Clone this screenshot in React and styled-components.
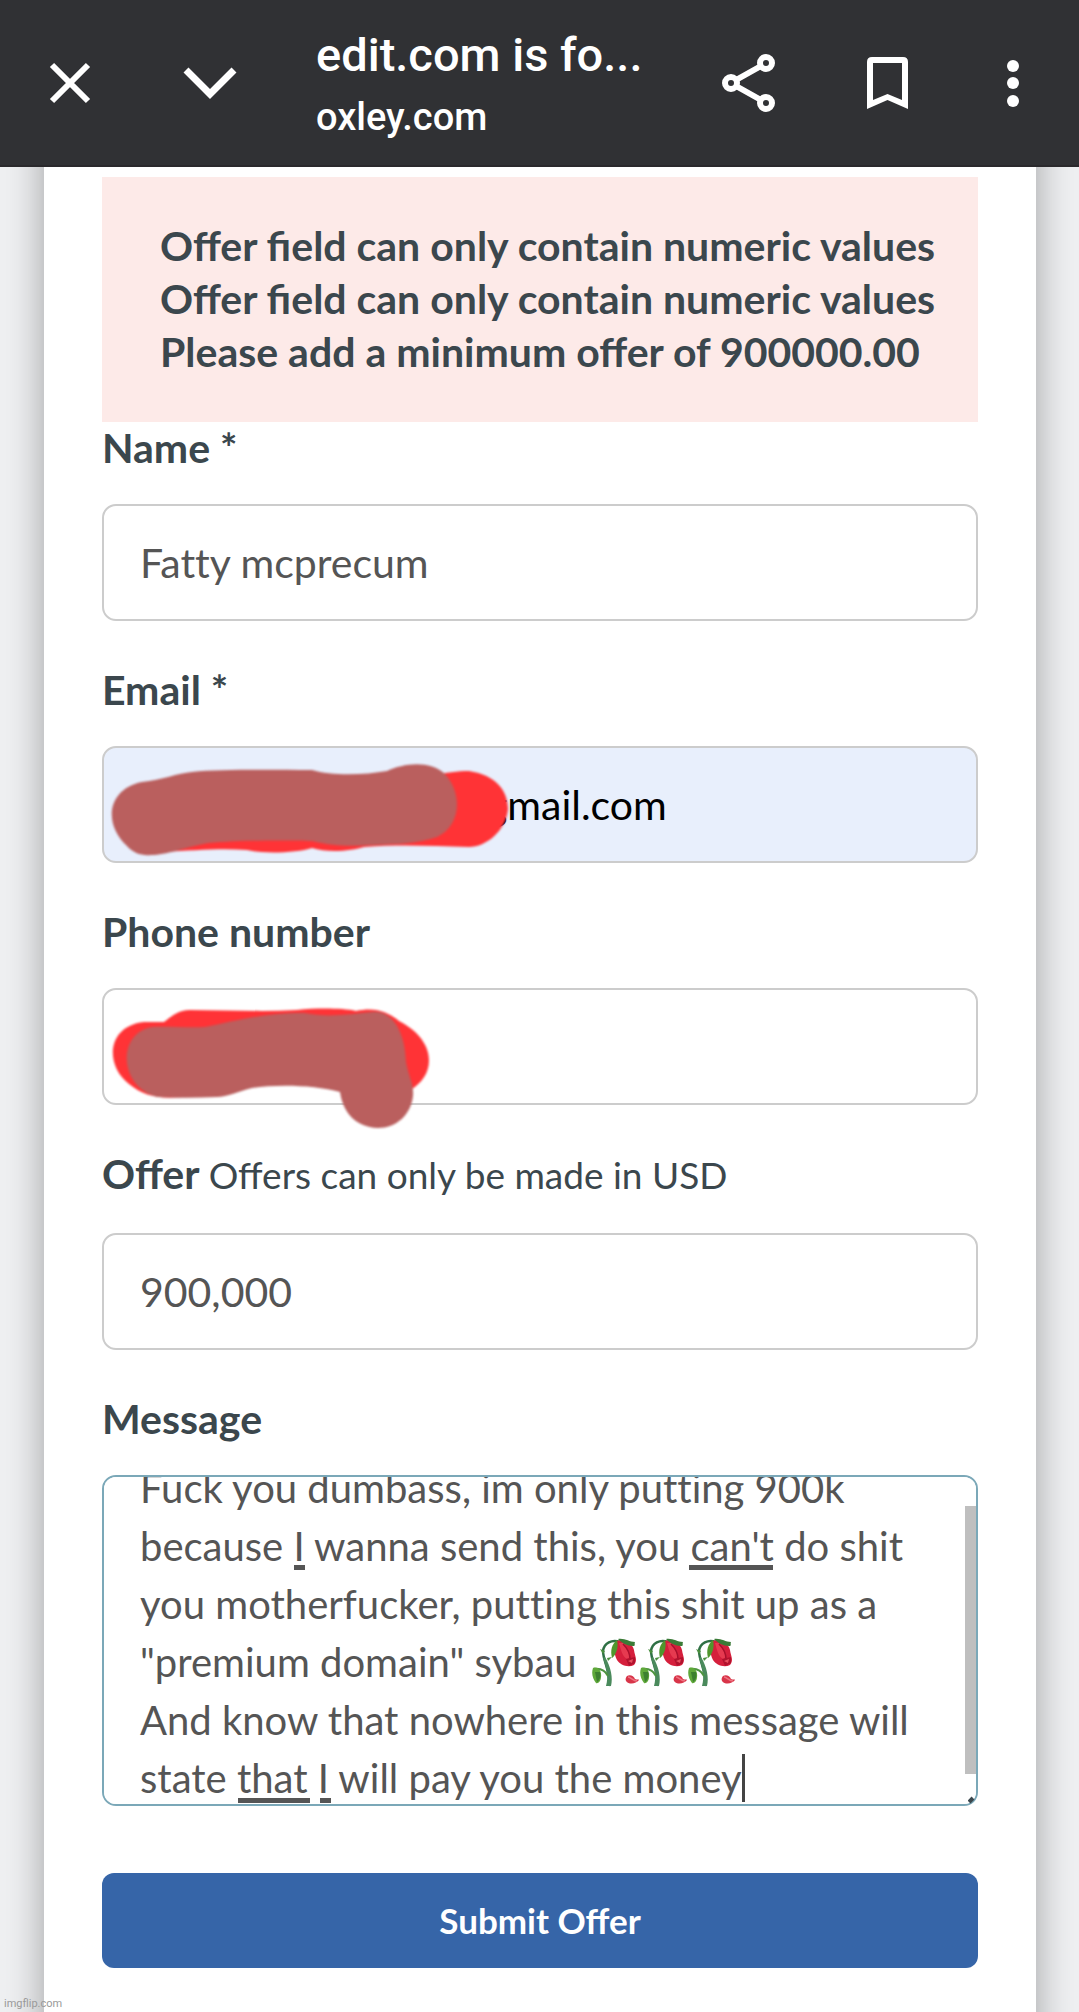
import { useEffect, useRef, useState } from "react";
import styled, { createGlobalStyle } from "styled-components";

const GlobalStyle = createGlobalStyle`
  * {
    box-sizing: border-box;
  }
  body {
    margin: 0;
    background: #eff0f2;
    font-family: Lato, "Liberation Sans", sans-serif;
    color: #3b474d;
  }
`;

const Page = styled.div`
  min-height: 100vh;
  display: flex;
  flex-direction: column;
  position: relative;
  overflow: hidden;
`;

const Toolbar = styled.header`
  height: 167px;
  padding: 0 36px 0 40px;
  display: flex;
  align-items: center;
  background: #303134;
  border-bottom: 2px solid #2a292c;
  z-index: 1;
`;

const ToolbarGroup = styled.div`
  display: flex;
  align-items: center;
  gap: 80px;
`;

const IconButton = styled.button`
  width: 60px;
  height: 60px;
  padding: 0;
  border: none;
  background: none;
  color: #fff;
  cursor: pointer;
  svg {
    display: block;
  }
`;

const MenuButton = styled(IconButton)`
  margin-left: 65px;
`;

const PageInfo = styled.div`
  flex: 1;
  min-width: 0;
  margin-left: 76px;
  color: #fff;
  font-family: Roboto, "Liberation Sans", sans-serif;
  font-weight: 500;
  white-space: nowrap;
`;

const PageTitle = styled.div`
  font-size: 47px;
  line-height: 68px;
`;

const PageHost = styled.div`
  font-size: 38px;
  line-height: 56px;
`;

/* runs past the top and bottom of the page so that only its side shadows show */
const Card = styled.form`
  flex: 1;
  margin: -60px 43px -60px 44px;
  padding: 70px 58px 104px;
  background: #fff;
  box-shadow: 0 0 36px rgba(0, 0, 0, 0.34);
`;

const ErrorBox = styled.div`
  padding: 42px 58px 44px;
  background: #fdeae8;
  font-size: 41px;
  line-height: 53px;
  font-weight: 700;
  white-space: nowrap;
`;

const Field = styled.div`
  margin-bottom: ${(props) => props.$space || 43}px;
`;

const Label = styled.label`
  display: block;
  margin-bottom: 31px;
  font-size: 41px;
  line-height: 51px;
  font-weight: 700;
`;

const Hint = styled.span`
  display: inline-block;
  font-size: 37px;
  line-height: 54px;
  font-weight: 400;
`;

const Control = styled.div`
  position: relative;
`;

const Input = styled.input`
  display: block;
  width: 100%;
  height: 117px;
  padding: 0 36px 0 ${(props) => props.$indent || 36}px;
  border: 2px solid #ccc;
  border-radius: 14px;
  outline: none;
  background: ${(props) => (props.$filled ? "#e8effc" : "#fff")};
  color: ${(props) => (props.$filled ? "#000" : "#555")};
  font-family: inherit;
  font-size: 41px;
  font-variant-ligatures: none;
`;

const TextArea = styled.textarea`
  display: block;
  width: 100%;
  height: 331px;
  padding: 24px 36px;
  border: 2px solid #7ba8b8;
  border-radius: 14px;
  outline: none;
  resize: none;
  overflow-y: scroll;
  scrollbar-width: none;
  background: #fff;
  color: #555;
  font-family: inherit;
  font-size: 40px;
  line-height: 58px;
  font-variant-ligatures: none;
`;

const Scribble = styled.svg`
  position: absolute;
  left: 0;
  top: 0;
  overflow: visible;
  filter: blur(1px);
  pointer-events: none;
`;

const Mark = styled.span`
  position: absolute;
  left: ${(props) => props.$x}px;
  top: ${(props) => props.$y}px;
  width: ${(props) => props.$width}px;
  height: 5px;
  background: #555;
  pointer-events: none;
`;

const Caret = styled.span`
  position: absolute;
  left: 640px;
  top: 279px;
  width: 3px;
  height: 48px;
  background: #444;
`;

const ScrollThumb = styled.span`
  position: absolute;
  right: 2px;
  top: 31px;
  width: 11px;
  height: 268px;
  background: #bfbfbf;
`;

const Grip = styled.svg`
  position: absolute;
  right: 2px;
  bottom: 2px;
`;

const Roses = styled.div`
  position: absolute;
  left: 490px;
  top: 163px;
  display: flex;
  pointer-events: none;
`;

const SubmitButton = styled.button`
  display: block;
  width: 100%;
  height: 95px;
  padding: 0 0 2px;
  border: none;
  border-radius: 12px;
  background: #3665a8;
  color: #fff;
  font-family: inherit;
  font-size: 35px;
  font-weight: 700;
  cursor: pointer;
`;

const Watermark = styled.div`
  position: absolute;
  left: 4px;
  bottom: 0;
  color: #999;
  font-family: Roboto, sans-serif;
  font-size: 11px;
  line-height: 16px;
`;

const errors = [
  "Offer field can only contain numeric values",
  "Offer field can only contain numeric values",
  "Please add a minimum offer of 900000.00",
];

const text = `Fuck you dumbass, im only putting 900k
because I wanna send this, you can't do shit
you motherfucker, putting this shit up as a
"premium domain" sybau
And know that nowhere in this message will
state that I will pay you the money`;

// spell check underlines inside the message box
const marks = [
  { x: 192, y: 90, width: 11 },
  { x: 587, y: 90, width: 84 },
  { x: 136, y: 323, width: 72 },
  { x: 218, y: 323, width: 11 },
];

const Rose = () => (
  <svg width="48" height="50" viewBox="0 0 48 50" aria-hidden="true">
    <path
      d="M17 48C19 34 11 23 11 13C12 5 20 1 28 4"
      fill="none"
      stroke="#2f7045"
      strokeWidth="2.500"
    />
    <path d="M14 48C17 38 14 29 11 20L13 19C19 29 21 40 19 48Z" fill="#4a8a5c" />
    <path d="M8 11L13 13L11 16ZM15 20L20 19L16 23Z" fill="#4b8f3e" />
    <path d="M16 38C13 32 9 30 2 31" fill="none" stroke="#4e9440" strokeWidth="2" />
    <path d="M1 30C6 28 10 33 9 39C9 43 6 46 4 45C1 41 -1 36 1 30Z" fill="#5fa83a" />
    <path d="M3 34L5 44C8 42 9 38 8 34Z" fill="#3d8030" />
    <path
      d="M25 3C33 0 40 5 42 12C43 19 46 22 42 27C36 30 28 27 25 22C22 16 21 8 25 3Z"
      fill="#d51f3c"
    />
    <path d="M27 5C29 12 30 18 35 21L38 19C36 14 35 9 31 5Z" fill="#e63a50" />
    <path d="M31 6C36 11 38 16 38 21" fill="none" stroke="#a80f2b" strokeWidth="1.500" />
    <path d="M34 21L43 19L43 25L37 28Z" fill="#b1122d" />
    <path d="M36 23L41 21L40 25Z" fill="#e8505f" />
    <path d="M25 2C20 6 18 12 20 20C24 17 27 9 25 2Z" fill="#4f962d" />
    <path d="M26 1C33 0 37 4 43 4C42 6 44 8 41 8C35 8 30 5 26 1Z" fill="#3b7b37" />
    <path
      d="M35 38C38 36 42 38 43 41C45 42 47 41 47 42C44 46 37 47 34 43C33 41 34 39 35 38Z"
      fill="#d83549"
    />
    <path d="M36 39C39 39 41 43 45 43" fill="none" stroke="#ee7482" strokeWidth="1.500" />
  </svg>
);

const App = () => {
  const [form, setForm] = useState({
    name: "Fatty mcprecum",
    email: "gmail.com",
    phone: "",
    offer: "900,000",
    message: text,
  });
  const messageRef = useRef(null);

  useEffect(() => {
    messageRef.current.scrollTop = 42;
  }, []);

  const handleChange = (e) => {
    setForm({ ...form, [e.target.name]: e.target.value });
  };

  return (
    <Page>
      <GlobalStyle />
      <Toolbar>
        <ToolbarGroup>
          <IconButton aria-label="Close">
            <svg width="60" height="60" viewBox="0 0 60 60">
              <path d="M12 12L48 48M48 12L12 48" stroke="currentColor" strokeWidth="6" />
            </svg>
          </IconButton>
          <IconButton aria-label="Expand">
            <svg width="60" height="60" viewBox="0 0 60 60">
              <path d="M6 17L30 41L54 17" fill="none" stroke="currentColor" strokeWidth="7" />
            </svg>
          </IconButton>
        </ToolbarGroup>
        <PageInfo>
          <PageTitle>edit.com is fo...</PageTitle>
          <PageHost>oxley.com</PageHost>
        </PageInfo>
        <ToolbarGroup>
          <IconButton aria-label="Share">
            <svg width="60" height="60" viewBox="0 0 60 60">
              <g fill="none" stroke="currentColor" strokeWidth="6">
                <path d="M18 27L43 13M18 33L43 47" />
                <circle cx="13" cy="30" r="6" />
                <circle cx="48" cy="10" r="6" />
                <circle cx="48" cy="50" r="6" />
              </g>
            </svg>
          </IconButton>
          <IconButton aria-label="Bookmark">
            <svg width="60" height="60" viewBox="0 0 60 60">
              <path
                d="M9 56V9Q9 4 14 4H45Q50 4 50 9V56L29.500 47ZM15 10V47L29.500 41L44 47V10Z"
                fill="currentColor"
                fillRule="evenodd"
              />
            </svg>
          </IconButton>
        </ToolbarGroup>
        <MenuButton aria-label="More">
          <svg width="60" height="60" viewBox="0 0 60 60" fill="currentColor">
            <circle cx="30" cy="13" r="6" />
            <circle cx="30" cy="30" r="6" />
            <circle cx="30" cy="48" r="6" />
          </svg>
        </MenuButton>
      </Toolbar>
      <Card onSubmit={(e) => e.preventDefault()}>
        <ErrorBox role="alert">
          {errors.map((error, i) => (
            <div key={i}>{error}</div>
          ))}
        </ErrorBox>
        <Field>
          <Label htmlFor="name">Name *</Label>
          <Input id="name" name="name" value={form.name} onChange={handleChange} />
        </Field>
        <Field>
          <Label htmlFor="email">Email *</Label>
          <Control>
            <Input
              id="email"
              name="email"
              $filled
              $indent={382}
              value={form.email}
              onChange={handleChange}
            />
            <Scribble width="420" height="117" aria-hidden="true">
              <path
                d="M60 40L330 29C345 27 355 25 367 25C394 29 406 45 406 63C404 85 384 101 367 101C330 100 300 98 262 101C250 105 225 107 210 102C195 107 160 108 145 104C120 102 95 104 60 106Z"
                fill="#ff3336"
              />
              <path
                d="M40 36C60 34 76 27 90 26C120 23 170 24 210 24C230 30 262 29 285 25C302 17 328 14 343 28C361 48 359 80 335 91C315 98 295 98 274 99C250 100 235 101 210 95C190 94 140 94 106 97C80 102 65 109 49 109C40 110 31 107 25 100C1 78 5 43 40 36Z"
                fill="#ba5f5e"
              />
            </Scribble>
          </Control>
        </Field>
        <Field>
          <Label htmlFor="phone">Phone number</Label>
          <Control>
            <Input
              id="phone"
              name="phone"
              type="tel"
              value={form.phone}
              onChange={handleChange}
            />
            <Scribble width="330" height="117" aria-hidden="true">
              <path
                d="M62 34C70 28 76 22 88 22C125 22 160 24 195 22C215 20 240 20 254 23C272 19 285 23 297 33C336 53 334 88 308 102L248 104C200 96 180 94 130 100C75 112 50 115 27 96C3 78 4 38 42 34Z"
                fill="#ff3336"
              />
              <path
                d="M50 39C65 38 85 40 103 39C130 34 158 25 202 25C225 30 250 26 270 24C290 22 303 43 304 74C307 90 312 96 311 108C309 127 294 140 276 140C253 139 241 124 238 104C213 97 176 96 150 100C137 103 125 109 115 109C95 110 73 110 55 109C16 98 15 45 50 39Z"
                fill="#ba5f5e"
              />
            </Scribble>
          </Control>
        </Field>
        <Field>
          <Label htmlFor="offer">
            Offer <Hint>Offers can only be made in USD</Hint>
          </Label>
          <Input id="offer" name="offer" value={form.offer} onChange={handleChange} />
        </Field>
        <Field $space={67}>
          <Label htmlFor="message">Message</Label>
          <Control>
            <TextArea
              id="message"
              name="message"
              ref={messageRef}
              spellCheck={false}
              value={form.message}
              onChange={handleChange}
            />
            {marks.map((mark) => (
              <Mark key={`${mark.x}-${mark.y}`} $x={mark.x} $y={mark.y} $width={mark.width} />
            ))}
            <Roses>
              <Rose />
              <Rose />
              <Rose />
            </Roses>
            <Caret />
            <ScrollThumb />
            <Grip width="8" height="8" aria-hidden="true">
              <path d="M1 6L5 2" stroke="#3b474d" strokeWidth="4" />
            </Grip>
          </Control>
        </Field>
        <SubmitButton type="submit">Submit Offer</SubmitButton>
      </Card>
      <Watermark>imgflip.com</Watermark>
    </Page>
  );
};

export default App;
